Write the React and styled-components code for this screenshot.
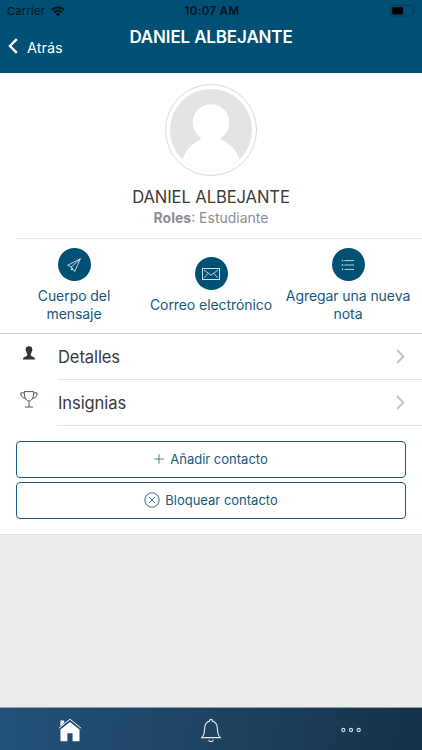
import React from "react";
import styled, { createGlobalStyle } from "styled-components";

const GlobalStyle = createGlobalStyle`
  * {
    box-sizing: border-box;
  }
  body {
    margin: 0;
    background: #ededed;
    font-family: "Inter", "Liberation Sans", sans-serif;
    color: #3a3a3a;
  }
  h1, h2, p {
    margin: 0;
    font-weight: 400;
  }
  button {
    font-family: inherit;
    padding: 0;
    margin: 0;
    background: none;
    border: none;
    cursor: pointer;
  }
  svg {
    display: block;
    flex-shrink: 0;
  }
`;

const WifiIcon = () => (
  <svg width="14" height="11" viewBox="0 0 14 11" fill="#06141c">
    <path d="M7 0.4C4.4 0.4 2 1.4 0.2 3L1.6 4.6A8 8 0 0 1 12.4 4.6L13.8 3C12 1.4 9.6 0.4 7 0.4Z" />
    <path d="M7 3.7C5.3 3.7 3.7 4.3 2.4 5.5L3.9 7.1A4.6 4.6 0 0 1 10.1 7.1L11.6 5.5C10.3 4.3 8.7 3.7 7 3.7Z" />
    <path d="M7 7C6.1 7 5.3 7.3 4.7 7.9L7 10.5L9.3 7.9C8.7 7.3 7.9 7 7 7Z" />
  </svg>
);

const BatteryIcon = () => (
  <svg width="27" height="12" viewBox="0 0 27 12">
    <rect x="0.6" y="0.6" width="23" height="10.4" rx="2.2" fill="none" stroke="#10384e" />
    <rect x="2.2" y="2.2" width="10.8" height="7.2" rx="0.8" fill="#000" />
    <path d="M24.6 4V7.6C25.6 7.2 25.6 4.4 24.6 4Z" fill="#10384e" />
  </svg>
);

const BackIcon = () => (
  <svg width="10" height="16" viewBox="0 0 10 16" fill="none" stroke="#fff" strokeWidth="2.4">
    <path d="M8.8 1.2L2 8L8.8 14.8" />
  </svg>
);

const AvatarIcon = () => (
  <svg width="82" height="82" viewBox="0 0 82 82">
    <defs>
      <clipPath id="face">
        <circle cx="41" cy="41" r="41" />
      </clipPath>
    </defs>
    <g clipPath="url(#face)">
      <rect width="82" height="82" fill="#e4e4e4" />
      <circle cx="41" cy="33.5" r="18.3" fill="#fff" />
      <path d="M31 47Q32 50 29 51.5C20 56 15.5 62 12.5 70.5V82H69.5V70.5C66.5 62 62 56 53 51.5Q50 50 51 47Z" fill="#fff" />
    </g>
  </svg>
);

const SendIcon = () => (
  <svg width="16" height="16" viewBox="0 0 16 16" fill="none" stroke="#d3e3ec" strokeWidth="0.9" strokeLinejoin="round">
    <path d="M14.4 1.7L1.6 8.3L5.4 9.9L8.6 14.6Z" />
    <path d="M14.4 1.7L5.4 9.9V13L7 12.2" />
  </svg>
);

const MailIcon = () => (
  <svg width="18" height="12" viewBox="0 0 18 12" fill="none" stroke="#d3e3ec" strokeWidth="1">
    <rect x="0.5" y="0.5" width="17" height="11" />
    <path d="M2 2L9 7.2L16 2M2.2 9.8L6.2 5.4M15.8 9.8L11.8 5.4" strokeWidth="0.9" />
  </svg>
);

const ListIcon = () => (
  <svg width="14" height="12" viewBox="0 0 14 12" fill="none" stroke="#d3e3ec">
    <path d="M3.4 1.6H13M3.4 6H13M3.4 10.4H13" strokeWidth="0.9" />
    <path d="M0.8 1.6H2.2M0.8 6H2.2M0.8 10.4H2.2" strokeWidth="1.3" />
  </svg>
);

const PersonIcon = () => (
  <svg width="14" height="15" viewBox="0 -1 14 15" fill="#333">
    <path d="M7 0.3C4.9 0.3 3.7 1.1 3.8 3.3C3.4 3.9 3.7 5 4.2 5.3C4.3 6.5 4.7 7.2 5.2 7.8C5.3 8.9 5.3 9.6 4.9 9.9C3.6 10.7 1.4 10.5 0.8 13.5H13.2C12.6 10.5 10.4 10.7 9.1 9.9C8.7 9.6 8.7 8.9 8.8 7.8C9.3 7.2 9.7 6.5 9.8 5.3C10.3 5 10.6 3.9 10.2 3.3C10.3 1.1 9.1 0.3 7 0.3Z" />
  </svg>
);

const TrophyIcon = () => (
  <svg width="18" height="17" viewBox="0 0 18 17" fill="none" stroke="#444" strokeWidth="0.9">
    <path d="M4.3 0.6H13.7C13.7 5.5 12.8 9.3 9 10.2C5.2 9.3 4.3 5.5 4.3 0.6Z" />
    <path d="M4.3 1.9H0.8C0.9 5 2 6.8 5.3 7.4M13.7 1.9H17.2C17.1 5 16 6.8 12.7 7.4" />
    <path d="M9 10.2V15.9M5 16H13" />
  </svg>
);

const ChevronIcon = () => (
  <svg width="9" height="15" viewBox="0 0 9 15" fill="none" stroke="#c5c5c9" strokeWidth="2">
    <path d="M1 1L7.4 7.5L1 14" />
  </svg>
);

const PlusIcon = () => (
  <svg width="10" height="10" viewBox="0 0 10 10" stroke="#33708f" strokeWidth="0.9">
    <path d="M5 0.3V9.7M0.3 5H9.7" />
  </svg>
);

const BlockIcon = () => (
  <svg width="16" height="16" viewBox="0 0 16 16" fill="none" stroke="#1f6083" strokeWidth="0.9">
    <circle cx="8" cy="8" r="7.2" />
    <path d="M4.9 4.9L11.1 11.1M11.1 4.9L4.9 11.1" />
  </svg>
);

const HomeIcon = () => (
  <svg width="24" height="24" viewBox="0 0 24 24" fill="#fff">
    <path d="M2.5 11.6L12 3.9L21.5 11.6V23.2H14.6V15.2H9.4V23.2H2.5Z" />
    <path d="M2.4 2.4H6.2V5L2.4 8.2Z" />
    <path d="M1 10.2L12 1.2L23 10.2" fill="none" stroke="#fff" strokeWidth="1" />
    <path d="M1.6 11.1L12 2.6L22.4 11.1" fill="none" stroke="#22496b" strokeWidth="0.8" />
  </svg>
);

const BellIcon = () => (
  <svg width="22" height="25" viewBox="0 0 22 25" fill="none" stroke="#e6edf2" strokeWidth="1.1">
    <path d="M9.6 3.1C9.6 0.8 12.4 0.8 12.4 3.1C16 4 17.3 6.6 17.4 10.5C17.5 15.5 17.9 17.3 20.2 19.6H1.8C4.1 17.3 4.5 15.5 4.6 10.5C4.7 6.6 6 4 9.6 3.1Z" />
    <path d="M8.6 21.8C8.9 24.2 13.1 24.2 13.4 21.8" />
  </svg>
);

const MoreIcon = () => (
  <svg width="22" height="6" viewBox="0 0 22 6" fill="none" stroke="#d5e0e8" strokeWidth="1.1">
    <circle cx="2.3" cy="3" r="1.6" />
    <circle cx="10" cy="3" r="1.6" />
    <circle cx="17.7" cy="3" r="1.6" />
  </svg>
);

const actions = [
  { text: "Cuerpo del mensaje", icon: <SendIcon />, width: 90 },
  { text: "Correo electrónico", icon: <MailIcon />, width: 130 },
  { text: "Agregar una nueva nota", icon: <ListIcon />, width: 130 },
];

const options = [
  { text: "Detalles", icon: <PersonIcon /> },
  { text: "Insignias", icon: <TrophyIcon /> },
];

const App = () => {
  return (
    <>
      <GlobalStyle />
      <Screen>
        <Header>
          <StatusBar>
            <Carrier>
              Carrier <WifiIcon />
            </Carrier>
            <Clock>10:07 AM</Clock>
            <Battery>
              <BatteryIcon />
            </Battery>
          </StatusBar>
          <NavBar>
            <BackButton>
              <BackIcon />
              <BackText>Atrás</BackText>
            </BackButton>
            <Title>DANIEL ALBEJANTE</Title>
          </NavBar>
        </Header>
        <Content>
          <Profile>
            <Avatar>
              <AvatarIcon />
            </Avatar>
            <Name>DANIEL ALBEJANTE</Name>
            <Roles>
              <strong>Roles</strong>: Estudiante
            </Roles>
          </Profile>
          <Actions>
            {actions.map((action) => (
              <Action key={action.text}>
                <Circle>{action.icon}</Circle>
                <ActionText $width={action.width}>{action.text}</ActionText>
              </Action>
            ))}
          </Actions>
          {options.map((option) => (
            <Option key={option.text}>
              <OptionIcon>{option.icon}</OptionIcon>
              <OptionBody>
                {option.text}
                <ChevronIcon />
              </OptionBody>
            </Option>
          ))}
          <Buttons>
            <ContactButton $gap="6px">
              <PlusIcon />
              Añadir contacto
            </ContactButton>
            <ContactButton $gap="5px">
              <BlockIcon />
              Bloquear contacto
            </ContactButton>
          </Buttons>
        </Content>
        <TabBar>
          <Tab>
            <HomeIcon />
          </Tab>
          <Tab>
            <BellIcon />
          </Tab>
          <Tab>
            <MoreIcon />
          </Tab>
        </TabBar>
      </Screen>
    </>
  );
};

const Screen = styled.div`
  display: flex;
  flex-direction: column;
  width: 422px;
  height: 750px;
  overflow: hidden;
  background: #ededed;
`;

const Header = styled.header`
  height: 73px;
  flex-shrink: 0;
  background: #004f74;
`;

const StatusBar = styled.div`
  display: grid;
  grid-template-columns: 1fr auto 1fr;
  align-items: center;
  height: 22px;
  padding: 0 5px 0 7px;
  color: #06141c;
`;

const Carrier = styled.div`
  display: flex;
  align-items: center;
  gap: 6px;
  font-size: 11px;
  letter-spacing: 0.3px;
`;

const Clock = styled.div`
  font-size: 11.5px;
  font-weight: 600;
  letter-spacing: 0.4px;
`;

const Battery = styled.div`
  display: flex;
  justify-content: flex-end;
`;

const NavBar = styled.div`
  display: grid;
  grid-template-columns: 100px 1fr 100px;
  color: #fff;
`;

const BackButton = styled.button`
  display: flex;
  align-items: center;
  gap: 9px;
  height: 20px;
  margin-top: 14px;
  padding-left: 8px;
  color: #fff;
`;

const BackText = styled.span`
  padding-top: 3px;
  font-size: 14.5px;
  line-height: 20px;
`;

const Title = styled.h1`
  line-height: 30px;
  text-align: center;
  white-space: nowrap;
  font-size: 17px;
  font-weight: 600;
  letter-spacing: -0.15px;
`;

const Content = styled.main`
  height: 462px;
  flex-shrink: 0;
  background: #fff;
  border-bottom: 1px solid #e2e2e2;
`;

const Profile = styled.section`
  display: flex;
  flex-direction: column;
  align-items: center;
  height: 165px;
  padding-top: 11px;
`;

const Avatar = styled.div`
  display: flex;
  align-items: center;
  justify-content: center;
  width: 92px;
  height: 92px;
  border: 1px solid #dadada;
  border-radius: 50%;
`;

const Name = styled.h2`
  margin-top: 10px;
  line-height: 22px;
  font-size: 16.6px;
  letter-spacing: -0.1px;
`;

const Roles = styled.p`
  line-height: 20px;
  font-size: 14px;
  color: #8e8e93;
  strong {
    font-weight: 700;
  }
`;

const Actions = styled.section`
  display: flex;
  height: 96px;
  padding: 0 5.5px;
  border-bottom: 1px solid #c8c7cc;
  background: linear-gradient(#e8e8ea, #e8e8ea) 16px 0 / 100% 1px no-repeat;
`;

const Action = styled.button`
  display: flex;
  flex: 1;
  flex-direction: column;
  align-items: center;
  justify-content: center;
`;

const Circle = styled.span`
  display: flex;
  align-items: center;
  justify-content: center;
  width: 33px;
  height: 33px;
  margin-bottom: 6px;
  border-radius: 50%;
  background: #004f74;
`;

const ActionText = styled.span`
  width: ${(props) => props.$width}px;
  line-height: 18px;
  font-size: 14px;
  letter-spacing: -0.07px;
  color: #15597c;
`;

const Option = styled.div`
  display: flex;
  height: 46px;
`;

const OptionIcon = styled.div`
  display: flex;
  justify-content: center;
  width: 58px;
  padding-top: 11px;
`;

const OptionBody = styled.div`
  display: flex;
  flex: 1;
  align-items: center;
  justify-content: space-between;
  padding-right: 17px;
  border-bottom: 1px solid #e4e4e6;
  font-size: 16.6px;
  letter-spacing: -0.12px;
`;

const Buttons = styled.div`
  display: flex;
  flex-direction: column;
  gap: 4px;
  padding: 15px 16px;
`;

const ContactButton = styled.button`
  display: flex;
  align-items: center;
  justify-content: center;
  gap: ${(props) => props.$gap};
  height: 37px;
  padding-bottom: 1px;
  border: 1px solid #1b5e82;
  border-radius: 4px;
  color: #15597c;
  font-size: 13px;
`;

const TabBar = styled.nav`
  display: flex;
  align-items: center;
  height: 43px;
  margin-top: auto;
  padding-top: 2px;
  border-top: 1px solid #8e9ca6;
  background: linear-gradient(100deg, #24527a 0%, #1e4564 45%, #15324a 100%);
`;

const Tab = styled.button`
  display: flex;
  flex: 1;
  align-items: center;
  justify-content: center;
`;

export default App;
